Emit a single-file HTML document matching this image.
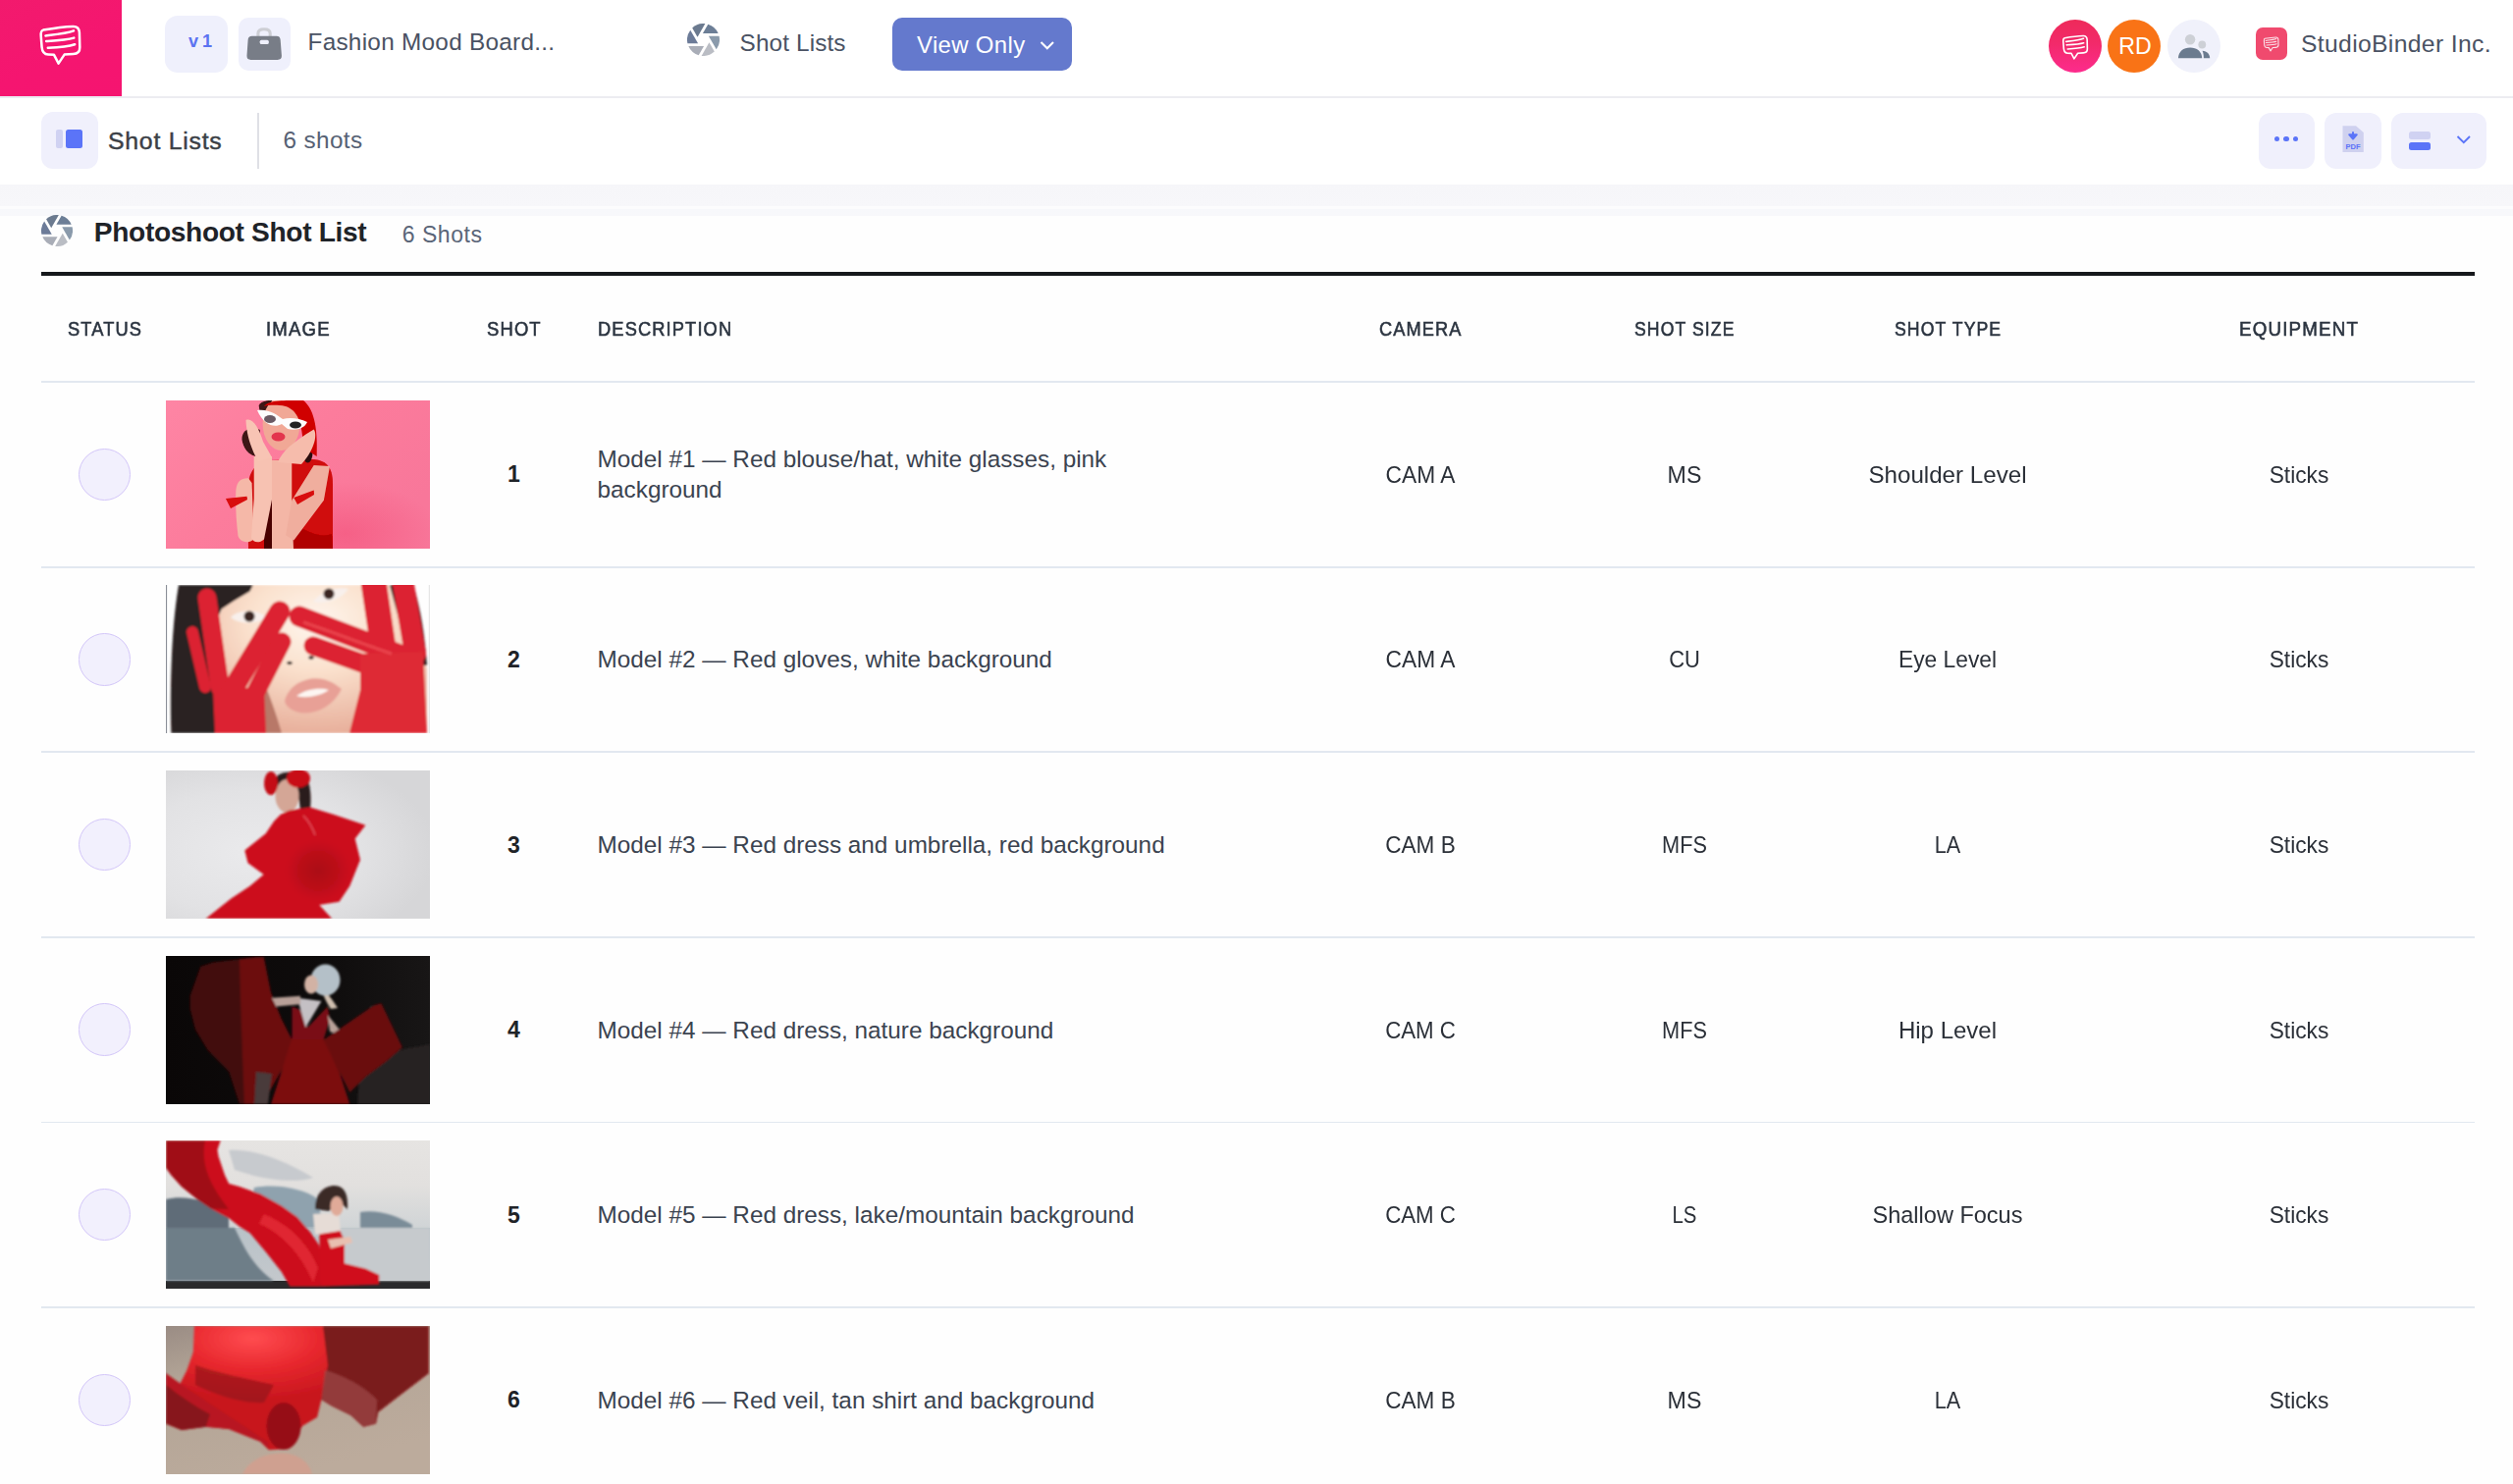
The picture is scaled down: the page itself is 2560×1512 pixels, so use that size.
<!DOCTYPE html>
<html><head><meta charset="utf-8"><title>Shot List</title>
<style>
html,body{margin:0;padding:0;}
body{width:2560px;height:1512px;overflow:hidden;position:relative;background:#fefefe;font-family:"Liberation Sans", sans-serif;}
.abs{position:absolute;}
.t{position:absolute;white-space:nowrap;}
</style></head><body>
<div class="abs" style="left:0;top:0;width:2560px;height:98px;background:#fff"></div>
<div class="abs" style="left:0;top:98px;width:2560px;height:2px;background:#ececf1"></div>
<div class="abs" style="left:0;top:0;width:124px;height:98px;background:linear-gradient(160deg,#f21a6d 0%,#f51570 60%,#f51470 100%)"></div>
<svg class="abs" style="left:0;top:0" width="124" height="98" viewBox="0 0 124 98"><path d="M44,30.6 C55,28.6 67,27.1 74.5,26.9 C78.8,26.8 80.6,28.8 80.9,33 L81.3,48.2 C81.4,52.8 79.4,54.7 74.6,55 L65.6,55.6 L59.6,64.6 L55,55.8 L49,55.6 C44.6,55.4 43,52.6 42.6,48.2 L41.7,36.2 C41.5,32.6 42.2,31 44,30.6 Z" fill="none" stroke="#fff" stroke-width="2.5" stroke-linejoin="round"/><path d="M46.4,36.4 C56,35.3 68,34.2 75,31.4" fill="none" stroke="#fff" stroke-width="2.5" stroke-linecap="round"/><path d="M47.2,42 C57,41.4 68,40.8 75.3,38.6" fill="none" stroke="#fff" stroke-width="2.5" stroke-linecap="round"/><path d="M48.8,48.8 C58,48.3 68,47.8 76.2,45.2" fill="none" stroke="#fff" stroke-width="2.5" stroke-linecap="round"/></svg>
<div class="abs" style="left:168px;top:16px;width:64px;height:58px;border-radius:13px;background:#eff0fc"></div>
<div class="t" style="left:192.00px;top:33.08px;font-size:18.1px;line-height:18.1px;color:#5b73f1;font-weight:700;letter-spacing:-0.5px;">v 1</div>
<div class="abs" style="left:243px;top:18px;width:53px;height:54px;border-radius:10px;background:#eff0fc"></div>
<svg class="abs" style="left:243px;top:18px" width="53" height="54" viewBox="243 18 53 54"><path d="M262.9,37 L262.9,34.2 C262.9,31.2 265,29.8 269,29.8 C273,29.8 275.2,31.2 275.2,34.2 L275.2,37" fill="none" stroke="#cdced4" stroke-width="3.1"/><path d="M256.6,36.8 L281.6,36.8 C284.4,36.8 285.6,38.3 285.7,41 L286.9,56.5 C287.1,59.4 285.7,60.9 282.8,60.9 L255.6,60.9 C252.7,60.9 251.3,59.4 251.5,56.5 L252.6,41 C252.8,38.3 253.9,36.8 256.6,36.8 Z" fill="#787d87"/><rect x="264.7" y="40.7" width="9.1" height="4.4" rx="1.6" fill="#eff0fc"/></svg>
<div class="t" style="left:313.50px;top:31.43px;font-size:24.3px;line-height:24.3px;color:#4a5263;font-weight:400;letter-spacing:0.29px;">Fashion Mood Board...</div>
<svg class="abs" style="left:700.4px;top:24px" width="33" height="33" viewBox="0 0 32 32"><path fill="#6c7e96" d="M15.45,9.65L30.69,9.65A16 16 0 0 0 20.63,0.68Z"/><path fill="#8a9aab" d="M21.23,12.35L28.84,25.54A16 16 0 0 0 31.58,12.35Z"/><path fill="#babdc4" d="M21.77,18.70L14.16,31.89A16 16 0 0 0 26.95,27.67Z"/><path fill="#a9adb7" d="M16.55,22.35L1.31,22.35A16 16 0 0 0 11.37,31.32Z"/><path fill="#6c7b98" d="M10.77,19.65L3.16,6.46A16 16 0 0 0 0.42,19.65Z"/><path fill="#6b7a8f" d="M10.23,13.30L17.84,0.11A16 16 0 0 0 5.05,4.33Z"/></svg>
<div class="t" style="left:753.60px;top:32.03px;font-size:24.3px;line-height:24.3px;color:#4a5263;font-weight:400;letter-spacing:0.133px;">Shot Lists</div>
<div class="abs" style="left:909px;top:18px;width:183px;height:54px;border-radius:10px;background:#6479cd"></div>
<div class="t" style="left:934.00px;top:34.07px;font-size:23.9px;line-height:23.9px;color:#ffffff;font-weight:400;letter-spacing:0.375px;">View Only</div>
<svg class="abs" style="left:1056px;top:38px" width="22" height="16" viewBox="0 0 22 16"><path d="M4.5,5 L10.8,11.2 L17,5" fill="none" stroke="#fff" stroke-width="2.1"/></svg>
<div class="abs" style="left:2086.5px;top:19.5px;width:54px;height:54px;border-radius:50%;background:linear-gradient(180deg,#ee2a5a 0%,#f22a6a 45%,#fd2b8d 100%)"></div>
<svg class="abs" style="left:2086.5px;top:19.5px" width="54" height="54" viewBox="0 0 54 54"><g transform="translate(14.7,16.4) scale(0.62) translate(-41.5,-26.8)"><path d="M44,30.6 C55,28.6 67,27.1 74.5,26.9 C78.8,26.8 80.6,28.8 80.9,33 L81.3,48.2 C81.4,52.8 79.4,54.7 74.6,55 L65.6,55.6 L59.6,64.6 L55,55.8 L49,55.6 C44.6,55.4 43,52.6 42.6,48.2 L41.7,36.2 C41.5,32.6 42.2,31 44,30.6 Z" fill="none" stroke="#fff" stroke-width="2.6" stroke-linejoin="round"/><path d="M46.4,36.4 C56,35.3 68,34.2 75,31.4" fill="none" stroke="#fff" stroke-width="2.6" stroke-linecap="round"/><path d="M47.2,42 C57,41.4 68,40.8 75.3,38.6" fill="none" stroke="#fff" stroke-width="2.6" stroke-linecap="round"/><path d="M48.8,48.8 C58,48.3 68,47.8 76.2,45.2" fill="none" stroke="#fff" stroke-width="2.6" stroke-linecap="round"/></g></svg>
<div class="abs" style="left:2147.2px;top:19.5px;width:54px;height:54px;border-radius:50%;background:#f97316"></div>
<div class="t" style="left:2144.90px;top:35.56px;width:60px;text-align:center;font-size:23.2px;line-height:23.2px;color:#ffffff;font-weight:400;letter-spacing:0px;">RD</div>
<div class="abs" style="left:2208.1px;top:19.5px;width:54px;height:54px;border-radius:50%;background:#f0f1fb"></div>
<svg class="abs" style="left:2208.1px;top:19.5px" width="54" height="54" viewBox="2208.1 19.5 54 54"><circle cx="2231.2" cy="39.7" r="5.2" fill="#cdd0d6"/><circle cx="2243.4" cy="45" r="3.9" fill="#cdd0d6"/><path d="M2219.1,58.8 C2219.1,52 2224.5,48 2231.2,48 C2237.9,48 2243.3,52 2243.3,58.8 Z" fill="#6b7b8f"/><path d="M2243.6,51.2 C2248.5,51.6 2251.3,54.6 2251.3,58.8 L2245,58.8 C2245,55.5 2244.6,53 2243.6,51.2 Z" fill="#6b7b8f"/></svg>
<div class="abs" style="left:2298px;top:28.4px;width:32.2px;height:32.4px;border-radius:7px;background:#f04a6e"></div>
<svg class="abs" style="left:2298px;top:28.4px" width="32.2" height="32.4" viewBox="0 0 32.2 32.4"><g transform="translate(8.3,9.9) scale(0.37) translate(-41.5,-26.8)"><path d="M44,30.6 C55,28.6 67,27.1 74.5,26.9 C78.8,26.8 80.6,28.8 80.9,33 L81.3,48.2 C81.4,52.8 79.4,54.7 74.6,55 L65.6,55.6 L59.6,64.6 L55,55.8 L49,55.6 C44.6,55.4 43,52.6 42.6,48.2 L41.7,36.2 C41.5,32.6 42.2,31 44,30.6 Z" fill="none" stroke="#fbe3ea" stroke-width="3" stroke-linejoin="round"/><path d="M46.4,36.4 C56,35.3 68,34.2 75,31.4" fill="none" stroke="#fbe3ea" stroke-width="3" stroke-linecap="round"/><path d="M47.2,42 C57,41.4 68,40.8 75.3,38.6" fill="none" stroke="#fbe3ea" stroke-width="3" stroke-linecap="round"/><path d="M48.8,48.8 C58,48.3 68,47.8 76.2,45.2" fill="none" stroke="#fbe3ea" stroke-width="3" stroke-linecap="round"/></g></svg>
<div class="t" style="left:2344.00px;top:33.19px;font-size:24.7px;line-height:24.7px;color:#4a5263;font-weight:400;letter-spacing:0.344px;">StudioBinder Inc.</div>
<div class="abs" style="left:0;top:100px;width:2560px;height:88px;background:#fff"></div>
<div class="abs" style="left:42.2px;top:114.3px;width:57.6px;height:57.7px;border-radius:12px;background:#f0f0fc"></div>
<div class="abs" style="left:57.2px;top:131.9px;width:6.9px;height:19.2px;border-radius:2px;background:#d0d2f2"></div>
<div class="abs" style="left:66.8px;top:131.9px;width:17.4px;height:19.2px;border-radius:2.5px;background:#5b74f8"></div>
<div class="t" style="left:110.00px;top:131.61px;font-size:24.8px;line-height:24.8px;color:#3b3f46;font-weight:400;letter-spacing:0.756px;-webkit-text-stroke:0.45px #3b3f46">Shot Lists</div>
<div class="abs" style="left:262.3px;top:114.6px;width:1.6px;height:57px;background:#dfe0e6"></div>
<div class="t" style="left:288.40px;top:131.43px;font-size:24.3px;line-height:24.3px;color:#566174;font-weight:400;letter-spacing:0.4px;">6 shots</div>
<div class="abs" style="left:2300.6px;top:114.7px;width:57.3px;height:57px;border-radius:12px;background:#f0f0fc"></div>
<div class="abs" style="left:2317.00px;top:138.90px;width:5.4px;height:5.4px;border-radius:50%;background:#5b74f8"></div>
<div class="abs" style="left:2326.40px;top:138.90px;width:5.4px;height:5.4px;border-radius:50%;background:#5b74f8"></div>
<div class="abs" style="left:2335.80px;top:138.90px;width:5.4px;height:5.4px;border-radius:50%;background:#5b74f8"></div>
<div class="abs" style="left:2368.4px;top:114.7px;width:57.6px;height:57px;border-radius:12px;background:#f0f0fc"></div>
<svg class="abs" style="left:2386px;top:127.8px" width="22" height="27.2" viewBox="0 0 22 27.2"><path d="M0.5,0.3 L14,0.3 L21.8,7 L21.8,27 L0.5,27 Z" fill="#cfd1ef"/><path d="M11,6.2 L11,10.5 M7.2,9.2 L11,13.5 L14.8,9.2 Z" stroke="#5b74f8" stroke-width="2" fill="#5b74f8" stroke-linejoin="round"/><text x="11" y="24" text-anchor="middle" font-family="Liberation Sans" font-weight="700" font-size="7.6" fill="#5b74f8">PDF</text></svg>
<div class="abs" style="left:2436.3px;top:114.7px;width:96.7px;height:57px;border-radius:12px;background:#f0f0fc"></div>
<div class="abs" style="left:2454px;top:133.8px;width:21.8px;height:8px;border-radius:2.5px;background:#d0d2f2"></div>
<div class="abs" style="left:2454px;top:144.5px;width:21.8px;height:8.2px;border-radius:2.5px;background:#5b74f8"></div>
<svg class="abs" style="left:2500px;top:134px" width="20" height="16" viewBox="0 0 20 16"><path d="M3.5,5 L9.8,11.2 L16,5" fill="none" stroke="#5b74f8" stroke-width="1.9"/></svg>
<div class="abs" style="left:0;top:188px;width:2560px;height:36px;background:linear-gradient(180deg,#f6f6f9 0px,#f7f7fa 22px,#fcfcfd 22px,#fcfcfd 25px,#f7f8fb 25px,#f8f8fb 32px,#fefefe 32px)"></div>
<svg class="abs" style="left:42.1px;top:219px" width="32" height="32" viewBox="0 0 32 32"><path fill="#6c7e96" d="M15.45,9.65L30.69,9.65A16 16 0 0 0 20.63,0.68Z"/><path fill="#8a9aab" d="M21.23,12.35L28.84,25.54A16 16 0 0 0 31.58,12.35Z"/><path fill="#babdc4" d="M21.77,18.70L14.16,31.89A16 16 0 0 0 26.95,27.67Z"/><path fill="#a9adb7" d="M16.55,22.35L1.31,22.35A16 16 0 0 0 11.37,31.32Z"/><path fill="#6c7b98" d="M10.77,19.65L3.16,6.46A16 16 0 0 0 0.42,19.65Z"/><path fill="#6b7a8f" d="M10.23,13.30L17.84,0.11A16 16 0 0 0 5.05,4.33Z"/></svg>
<div class="t" style="left:95.80px;top:222.81px;font-size:28.1px;line-height:28.1px;color:#1f2328;font-weight:700;letter-spacing:-0.321px;">Photoshoot Shot List</div>
<div class="t" style="left:409.80px;top:227.53px;font-size:23.0px;line-height:23.0px;color:#5a6578;font-weight:400;letter-spacing:0.517px;">6 Shots</div>
<div class="abs" style="left:42px;top:277px;width:2479px;height:3.5px;background:#16181c"></div>
<div class="t" style="left:69.20px;top:325.31px;font-size:20.9px;line-height:20.9px;color:#2b3440;font-weight:400;letter-spacing:1.3px;-webkit-text-stroke:0.6px #2b3440;transform:scaleX(0.8741);transform-origin:0 0;">STATUS</div>
<div class="t" style="left:271.30px;top:325.31px;font-size:20.9px;line-height:20.9px;color:#2b3440;font-weight:400;letter-spacing:1.3px;-webkit-text-stroke:0.6px #2b3440;transform:scaleX(0.8915);transform-origin:0 0;">IMAGE</div>
<div class="t" style="left:496.10px;top:325.31px;font-size:20.9px;line-height:20.9px;color:#2b3440;font-weight:400;letter-spacing:1.3px;-webkit-text-stroke:0.6px #2b3440;transform:scaleX(0.882);transform-origin:0 0;">SHOT</div>
<div class="t" style="left:609.30px;top:325.31px;font-size:20.9px;line-height:20.9px;color:#2b3440;font-weight:400;letter-spacing:1.3px;-webkit-text-stroke:0.6px #2b3440;transform:scaleX(0.8739);transform-origin:0 0;">DESCRIPTION</div>
<div class="t" style="left:1404.90px;top:325.31px;font-size:20.9px;line-height:20.9px;color:#2b3440;font-weight:400;letter-spacing:1.3px;-webkit-text-stroke:0.6px #2b3440;transform:scaleX(0.8708);transform-origin:0 0;">CAMERA</div>
<div class="t" style="left:1664.50px;top:325.31px;font-size:20.9px;line-height:20.9px;color:#2b3440;font-weight:400;letter-spacing:1.3px;-webkit-text-stroke:0.6px #2b3440;transform:scaleX(0.8433);transform-origin:0 0;">SHOT SIZE</div>
<div class="t" style="left:1929.80px;top:325.31px;font-size:20.9px;line-height:20.9px;color:#2b3440;font-weight:400;letter-spacing:1.3px;-webkit-text-stroke:0.6px #2b3440;transform:scaleX(0.8445);transform-origin:0 0;">SHOT TYPE</div>
<div class="t" style="left:2281.30px;top:325.31px;font-size:20.9px;line-height:20.9px;color:#2b3440;font-weight:400;letter-spacing:1.3px;-webkit-text-stroke:0.6px #2b3440;transform:scaleX(0.8992);transform-origin:0 0;">EQUIPMENT</div>
<div class="abs" style="left:42px;top:388.20px;width:2479px;height:1.9px;background:#e2e8f0"></div>
<div class="abs" style="left:42px;top:576.80px;width:2479px;height:1.9px;background:#e2e8f0"></div>
<div class="abs" style="left:79.65px;top:456.55px;width:53.5px;height:53.5px;box-sizing:border-box;border-radius:50%;background:#f2f0fd;border:1.9px solid #d3c6f9"></div>
<svg class="abs" style="left:169px;top:407.80px" width="269" height="151" viewBox="0 0 269 151"><defs><linearGradient id="g1" x1="0" y1="0" x2="1" y2="0.6"><stop offset="0" stop-color="#fe85a4"/><stop offset="0.5" stop-color="#fc7c9c"/><stop offset="1" stop-color="#f8779a"/></linearGradient><radialGradient id="r1" cx="0.68" cy="0.9" r="0.35"><stop offset="0" stop-color="#f4567e" stop-opacity="0.7"/><stop offset="1" stop-color="#f4567e" stop-opacity="0"/></radialGradient><filter id="f1"><feGaussianBlur stdDeviation="0.6"/></filter></defs>
<rect width="269" height="151" fill="url(#g1)"/><rect width="269" height="151" fill="url(#r1)"/>
<g filter="url(#f1)">
<path d="M84,151 L83.5,90 C84,72 92,63 104,61 L150,60 C162,61 170,66 170,85 L170,151 Z" fill="#d00808"/>
<path d="M128,151 L130,125 C145,135 158,140 169,136 L170,151 Z" fill="#b00004"/>
<rect x="100" y="86" width="8" height="65" fill="#4a0000"/>
<path d="M71.3,92 C72,82 77,79 84,79.3 L87.6,84 L89.7,141.4 C84,146 76,145 73.5,138 C71.5,122 70.8,106 71.3,92 Z" fill="#f5b8a8"/>
<path d="M89.7,57 L108,57 L108,101 L100,141.4 C95,146 89,145 87,140 L89.7,100 Z" fill="#f7c2b2"/>
<path d="M61,100 L82.5,97.7 L83,101 L66,110 Z" fill="#d80808"/>
<path d="M108,61 L128.3,61 L128.3,110 L130,151 L108,151 Z" fill="#f4b6a6"/>
<path d="M122.2,137.3 L128.3,101.7 L150.7,66.1 L167,67.1 L160.9,101.7 L130.3,142.4 Z" fill="#f0ae9e"/>
<path d="M130.3,99 L150.7,91.6 L151,96 L134,106 Z" fill="#d80808"/>
<path d="M77.5,40 C77,30 86,26 95.8,30 L95.8,57 C86,58 79,50 77.5,40 Z" fill="#3c1212"/>
<path d="M94.7,5 C98,0 104,0 108,0 L108,12 L96,14 Z" fill="#3c1212"/>
<ellipse cx="144.5" cy="53" rx="5" ry="10.5" fill="#2a0a0a"/>
<ellipse cx="117.6" cy="24" rx="19" ry="27" fill="#f1a896"/>
<path d="M100,6 C104,0 118,0 135,0 L140,0 C150,8 155,25 153.7,57 L140,48 C139,22 134,10 122,6 C112,4 104,5 100,6 Z" fill="#d00000"/>
<path d="M81.5,20 C88,17 95,28 99,42 L108,58 L94,62 C88,52 82,36 81.5,20 Z" fill="#f8c4b4"/>
<path d="M150.7,29.5 C155,36 150,52 138,65 L114,63 C118,52 130,42 150.7,29.5 Z" fill="#f6bcac"/>
<path d="M93,10 C104,8 114,15 119,19 C126,17 136,18 144,22 C141,29 132,31 124,29 L118,24 C111,28 100,26 93,10 Z" fill="#fdfdfd"/>
<ellipse cx="106" cy="19" rx="6" ry="4" fill="#6a5a64"/><ellipse cx="132" cy="25" rx="6" ry="3.5" fill="#222024"/>
<ellipse cx="114.5" cy="37" rx="7" ry="4.5" fill="#e3354e"/>
</g></svg>
<div class="t" style="left:493.30px;top:472.43px;width:60px;text-align:center;font-size:23.0px;line-height:23.0px;color:#1f2328;font-weight:700;letter-spacing:0px;">1</div>
<div class="t" style="left:608.60px;top:455.73px;font-size:24.3px;line-height:24.3px;color:#3b4350;font-weight:400;letter-spacing:0px;white-space:nowrap">Model #1 — Red blouse/hat, white glasses, pink</div>
<div class="t" style="left:608.60px;top:487.43px;font-size:24.3px;line-height:24.3px;color:#3b4350;font-weight:400;letter-spacing:0px;">background</div>
<div class="t" style="left:1297.20px;top:471.83px;width:300px;text-align:center;font-size:24.3px;line-height:24.3px;color:#2b3038;font-weight:400;letter-spacing:0px;;transform:scaleX(0.936);transform-origin:50% 0;">CAM A</div>
<div class="t" style="left:1565.50px;top:471.83px;width:300px;text-align:center;font-size:24.3px;line-height:24.3px;color:#2b3038;font-weight:400;letter-spacing:0px;;transform:scaleX(0.953);transform-origin:50% 0;">MS</div>
<div class="t" style="left:1833.90px;top:471.83px;width:300px;text-align:center;font-size:24.3px;line-height:24.3px;color:#2b3038;font-weight:400;letter-spacing:0px;;transform:scaleX(0.994);transform-origin:50% 0;">Shoulder Level</div>
<div class="t" style="left:2191.70px;top:471.83px;width:300px;text-align:center;font-size:24.3px;line-height:24.3px;color:#2b3038;font-weight:400;letter-spacing:0px;;transform:scaleX(0.936);transform-origin:50% 0;">Sticks</div>
<div class="abs" style="left:42px;top:765.40px;width:2479px;height:1.9px;background:#e2e8f0"></div>
<div class="abs" style="left:79.65px;top:645.15px;width:53.5px;height:53.5px;box-sizing:border-box;border-radius:50%;background:#f2f0fd;border:1.9px solid #d3c6f9"></div>
<svg class="abs" style="left:169px;top:596.40px" width="269" height="151" viewBox="0 0 269 151"><defs><filter id="f2"><feGaussianBlur stdDeviation="0.9"/></filter><radialGradient id="g2" cx="0.47" cy="0.25" r="0.75"><stop offset="0" stop-color="#fff6ee"/><stop offset="0.45" stop-color="#fae0cc"/><stop offset="1" stop-color="#e8b09c"/></radialGradient></defs>
<rect width="269" height="151" fill="#fefefe"/>
<rect x="0" y="0" width="1.1" height="151" fill="#8a8f98"/><rect x="267.8" y="0" width="1" height="151" fill="#e0e0e0"/>
<g filter="url(#f2)">
<path d="M53.5,0 L235,0 L266,85 L266,151 L53.5,151 Z" fill="url(#g2)"/>
<path d="M13,0 L88.8,0 L85.6,6.4 L69.6,16 L56.7,24.6 L53.5,32 L53.5,151 L5.4,151 C4,100 6,40 13,0 Z" fill="#2a2020"/>
<path d="M228,0 L252,0 C260,25 264,55 266,82 L250,82 Z" fill="#2a1e1e"/>
<path d="M95,88 C105,110 112,130 118,151 L88,151 C88,125 90,105 95,88 Z" fill="#b87868"/>
<path d="M66,33 C74,25 92,24 103,33 C92,40 76,41 66,33 Z" fill="#f8f0ec"/><ellipse cx="85" cy="32" rx="5.5" ry="5.5" fill="#3a2622"/>
<path d="M150,17 C158,6 176,1 186,4 C178,16 160,20 150,17 Z" fill="#f8f0ec"/><ellipse cx="166" cy="9" rx="5.5" ry="5.5" fill="#3a2622"/>
<ellipse cx="126" cy="79.5" rx="2.8" ry="1.8" fill="#2a1a18"/><ellipse cx="148" cy="74" rx="2.8" ry="1.8" fill="#2a1a18"/>
<path d="M121,118 C126,100 145,93 160,96 C170,98 176,104 179,106 C170,125 150,133 136,130 C128,128 122,124 121,118 Z" fill="#e8a096"/>
<path d="M133,113 C142,106 158,104 166,107 C158,113 142,116 133,113 Z" fill="#fdf6f2"/>
<g stroke="#dc2430" stroke-linecap="round" fill="none">
<path d="M27,48 L40,104" stroke-width="12"/>
<path d="M42,13 L55,104" stroke-width="19"/>
<path d="M116,27 L67,108" stroke-width="21"/>
<path d="M118,58 L82,128" stroke-width="19"/>
<path d="M136,32 L241,72" stroke-width="21"/>
<path d="M150,62 L234,92" stroke-width="19"/>
<path d="M212,0 L222,68" stroke-width="26"/>
<path d="M242,0 L254,70" stroke-width="22"/>
</g>
<path d="M48,107 L100,104 L102,151 L50,151 Z" fill="#dc2430"/>
<path d="M198,70 L262,68 L266,151 L187,151 L198,107 Z" fill="#de2a34"/>
<path d="M140,38 C170,48 200,60 230,70" stroke="#ee5058" stroke-width="3" fill="none" opacity="0.7"/>
</g></svg>
<div class="t" style="left:493.30px;top:661.03px;width:60px;text-align:center;font-size:23.0px;line-height:23.0px;color:#1f2328;font-weight:700;letter-spacing:0px;">2</div>
<div class="t" style="left:608.60px;top:660.43px;font-size:24.3px;line-height:24.3px;color:#3b4350;font-weight:400;letter-spacing:0px;white-space:nowrap">Model #2 — Red gloves, white background</div>
<div class="t" style="left:1297.20px;top:660.43px;width:300px;text-align:center;font-size:24.3px;line-height:24.3px;color:#2b3038;font-weight:400;letter-spacing:0px;;transform:scaleX(0.936);transform-origin:50% 0;">CAM A</div>
<div class="t" style="left:1565.50px;top:660.43px;width:300px;text-align:center;font-size:24.3px;line-height:24.3px;color:#2b3038;font-weight:400;letter-spacing:0px;;transform:scaleX(0.903);transform-origin:50% 0;">CU</div>
<div class="t" style="left:1833.90px;top:660.43px;width:300px;text-align:center;font-size:24.3px;line-height:24.3px;color:#2b3038;font-weight:400;letter-spacing:0px;;transform:scaleX(0.937);transform-origin:50% 0;">Eye Level</div>
<div class="t" style="left:2191.70px;top:660.43px;width:300px;text-align:center;font-size:24.3px;line-height:24.3px;color:#2b3038;font-weight:400;letter-spacing:0px;;transform:scaleX(0.936);transform-origin:50% 0;">Sticks</div>
<div class="abs" style="left:42px;top:954.00px;width:2479px;height:1.9px;background:#e2e8f0"></div>
<div class="abs" style="left:79.65px;top:833.75px;width:53.5px;height:53.5px;box-sizing:border-box;border-radius:50%;background:#f2f0fd;border:1.9px solid #d3c6f9"></div>
<svg class="abs" style="left:169px;top:785.00px" width="269" height="151" viewBox="0 0 269 151"><defs><filter id="f3"><feGaussianBlur stdDeviation="1"/></filter><radialGradient id="g3" cx="0.32" cy="0.55" r="0.7"><stop offset="0" stop-color="#eaeaec"/><stop offset="0.6" stop-color="#e2e2e4"/><stop offset="1" stop-color="#d6d6d8"/></radialGradient><radialGradient id="d3" cx="0.5" cy="0.5" r="0.5"><stop offset="0" stop-color="#a00812" stop-opacity="0.75"/><stop offset="0.6" stop-color="#a80a16" stop-opacity="0.45"/><stop offset="1" stop-color="#b80c18" stop-opacity="0"/></radialGradient></defs>
<rect width="269" height="151" fill="url(#g3)"/>
<g filter="url(#f3)">
<path d="M113,6 C118,0 138,0 144,8 C148,18 148,30 147,40 L137,40 C136,25 130,12 120,10 L112,20 Z" fill="#2a1a1a"/>
<ellipse cx="123.5" cy="26" rx="12" ry="17" fill="#d4a696"/>
<ellipse cx="107" cy="13" rx="7" ry="12" fill="#c40814"/><ellipse cx="135" cy="8" rx="12" ry="9.5" fill="#c80a16"/>
<path d="M116.7,45 L125.2,40.7 L146.7,37.5 L171.3,45 L203.4,55.7 L192.7,69.6 L198,91 L191.6,107 L187.3,117.8 L176.6,133.8 L156.3,137 L169.1,151 L40.7,151 L66.4,130.6 L85.6,117.8 L99.6,106 L83.5,94.2 L80.3,81.4 L101.7,64.2 L110.3,51.4 Z" fill="#cc101c"/>
<ellipse cx="155" cy="102" rx="34" ry="32" fill="url(#d3)"/>
<path d="M140,46 C146,52 150,60 152,66" stroke="#e86070" stroke-width="2" fill="none" opacity="0.6"/>
</g></svg>
<div class="t" style="left:493.30px;top:849.63px;width:60px;text-align:center;font-size:23.0px;line-height:23.0px;color:#1f2328;font-weight:700;letter-spacing:0px;">3</div>
<div class="t" style="left:608.60px;top:849.03px;font-size:24.3px;line-height:24.3px;color:#3b4350;font-weight:400;letter-spacing:0px;white-space:nowrap">Model #3 — Red dress and umbrella, red background</div>
<div class="t" style="left:1297.20px;top:849.03px;width:300px;text-align:center;font-size:24.3px;line-height:24.3px;color:#2b3038;font-weight:400;letter-spacing:0px;;transform:scaleX(0.928);transform-origin:50% 0;">CAM B</div>
<div class="t" style="left:1565.50px;top:849.03px;width:300px;text-align:center;font-size:24.3px;line-height:24.3px;color:#2b3038;font-weight:400;letter-spacing:0px;;transform:scaleX(0.894);transform-origin:50% 0;">MFS</div>
<div class="t" style="left:1833.90px;top:849.03px;width:300px;text-align:center;font-size:24.3px;line-height:24.3px;color:#2b3038;font-weight:400;letter-spacing:0px;;transform:scaleX(0.889);transform-origin:50% 0;">LA</div>
<div class="t" style="left:2191.70px;top:849.03px;width:300px;text-align:center;font-size:24.3px;line-height:24.3px;color:#2b3038;font-weight:400;letter-spacing:0px;;transform:scaleX(0.936);transform-origin:50% 0;">Sticks</div>
<div class="abs" style="left:42px;top:1142.60px;width:2479px;height:1.9px;background:#e2e8f0"></div>
<div class="abs" style="left:79.65px;top:1022.35px;width:53.5px;height:53.5px;box-sizing:border-box;border-radius:50%;background:#f2f0fd;border:1.9px solid #d3c6f9"></div>
<svg class="abs" style="left:169px;top:973.60px" width="269" height="151" viewBox="0 0 269 151"><defs><filter id="f4"><feGaussianBlur stdDeviation="1.1"/></filter><linearGradient id="bg4" x1="0" y1="0" x2="1" y2="0"><stop offset="0" stop-color="#0a0707"/><stop offset="0.6" stop-color="#0e0c0c"/><stop offset="1" stop-color="#181616"/></linearGradient></defs>
<rect width="269" height="151" fill="url(#bg4)"/>
<g filter="url(#f4)">
<path d="M198,112 C215,100 240,95 269,90 L269,151 L195,151 Z" fill="#262222"/>
<path d="M24.6,40.7 L35.3,10.7 L48.2,6.4 L75,3.2 L91,1.1 L99.6,1.1 L101.7,10.7 L107,37.5 L117.7,64.2 L128.5,85.6 L123,107 L105,139 L98.5,151 L75,151 L64.2,117.8 L42.8,96.3 L30,75 L24.6,53.5 Z" fill="#420808"/>
<path d="M75,3.2 L99.6,1.1 L107,37.5 L117.7,64.2 L128.5,85.6 L123,107 L105,139 L98.5,151 L80,151 C78,100 76,50 75,3.2 Z" fill="#6c0a0e"/>
<path d="M92,118 L108,120 L104,151 L90,151 Z" fill="#4a3a3a"/>
<path d="M128.5,83.5 L160.6,83.5 L176.6,117.8 L187.3,151 L107,151 L117.7,117.8 Z" fill="#7c0810"/>
<path d="M128.5,51.4 L139,55.7 L144.5,72.8 L164.8,51.4 L167,64.2 L160.6,85.6 L128.5,85.6 Z" fill="#7a0a12"/>
<path d="M133.8,42.8 L158.4,46 L142.4,72.8 Z" fill="#c4c0c4"/>
<path d="M108,42.8 L137,40.7 L137,49.2 L112.4,51.4 Z" fill="#b8a098"/>
<path d="M164.8,60 L182,81.4 L209.8,51.4 L214,53.5 L188.4,85.6 L167,77.1 Z" fill="#b8a098"/>
<path d="M160.6,85.6 L212,50.3 L219.4,48.2 L240.8,93.1 L224.8,107 L203.4,123 L187.3,139 L176.6,117.8 Z" fill="#6a0a0e"/>
<path d="M158,27 C162,35 172,48 175,53 L168,54 C162,45 158,36 158,27 Z" fill="#d0c0b0"/>
<ellipse cx="162.5" cy="24.5" rx="15" ry="16" fill="#b4c0c8"/>
<ellipse cx="148" cy="29" rx="7" ry="9.5" fill="#d2b2a4"/>
</g></svg>
<div class="t" style="left:493.30px;top:1038.23px;width:60px;text-align:center;font-size:23.0px;line-height:23.0px;color:#1f2328;font-weight:700;letter-spacing:0px;">4</div>
<div class="t" style="left:608.60px;top:1037.63px;font-size:24.3px;line-height:24.3px;color:#3b4350;font-weight:400;letter-spacing:0px;white-space:nowrap">Model #4 — Red dress, nature background</div>
<div class="t" style="left:1297.20px;top:1037.63px;width:300px;text-align:center;font-size:24.3px;line-height:24.3px;color:#2b3038;font-weight:400;letter-spacing:0px;;transform:scaleX(0.916);transform-origin:50% 0;">CAM C</div>
<div class="t" style="left:1565.50px;top:1037.63px;width:300px;text-align:center;font-size:24.3px;line-height:24.3px;color:#2b3038;font-weight:400;letter-spacing:0px;;transform:scaleX(0.894);transform-origin:50% 0;">MFS</div>
<div class="t" style="left:1833.90px;top:1037.63px;width:300px;text-align:center;font-size:24.3px;line-height:24.3px;color:#2b3038;font-weight:400;letter-spacing:0px;;transform:scaleX(0.988);transform-origin:50% 0;">Hip Level</div>
<div class="t" style="left:2191.70px;top:1037.63px;width:300px;text-align:center;font-size:24.3px;line-height:24.3px;color:#2b3038;font-weight:400;letter-spacing:0px;;transform:scaleX(0.936);transform-origin:50% 0;">Sticks</div>
<div class="abs" style="left:42px;top:1331.20px;width:2479px;height:1.9px;background:#e2e8f0"></div>
<div class="abs" style="left:79.65px;top:1210.95px;width:53.5px;height:53.5px;box-sizing:border-box;border-radius:50%;background:#f2f0fd;border:1.9px solid #d3c6f9"></div>
<svg class="abs" style="left:169px;top:1162.20px" width="269" height="151" viewBox="0 0 269 151"><defs><filter id="f5"><feGaussianBlur stdDeviation="1.1"/></filter><linearGradient id="g5" x1="0" y1="0" x2="0" y2="1"><stop offset="0" stop-color="#e6e4e2"/><stop offset="0.3" stop-color="#e2e0de"/><stop offset="0.59" stop-color="#d0d4d6"/><stop offset="0.59" stop-color="#b8c2c8"/><stop offset="0.95" stop-color="#c4c8cc"/><stop offset="0.95" stop-color="#2a2a2c"/><stop offset="1" stop-color="#2a2a2c"/></linearGradient></defs>
<rect width="269" height="151" fill="url(#g5)"/>
<g filter="url(#f5)">
<path d="M64,10 C90,8 120,20 150,38 C130,44 100,40 70,30 Z" fill="#c4c8cc" opacity="0.9"/>
<path d="M0,60 C20,55 40,62 64,70 L64,89 L0,89 Z" fill="#5e6c78"/>
<path d="M90,48 C110,44 140,48 155,60 L160,89 L80,89 Z" fill="#8fa2ae"/>
<path d="M198,73 C215,70 235,76 251,86 L251,89 L198,89 Z" fill="#7a8c98"/>
<path d="M0,89 L70,89 C80,110 90,130 110,143 L0,143 Z" fill="#6e7e88"/>
<path d="M160,89 L269,89 L269,143 L160,143 Z" fill="#c6cacd"/>
<path d="M0,0 L55.7,0 L52.5,9.6 L53.5,16 L60,35.3 L64.2,43.9 L75,47.1 L96.3,54.6 L117.7,66.4 L133.8,78.1 L147.7,94.2 L156.3,107 L159.5,123 L158.4,139 L157.4,148.8 L126.3,148.8 L117.7,133.8 L101.7,113.5 L85.6,94.2 L75,87.8 L64.2,79.2 L46,69.6 L32.1,60 L16,47.1 L5.4,35.3 L0,27.8 Z" fill="#cc0e1c"/>
<path d="M0,0 L40,0 C35,25 45,45 64,70 L46,69.6 L32.1,60 L16,47.1 L5.4,35.3 L0,27.8 Z" fill="#a00a14"/>
<path d="M100,75 C125,85 145,105 155,130 L150,145 C140,120 120,95 95,85 Z" fill="#e8303a" opacity="0.7"/>
<path d="M156.3,92 L175.5,87.8 L182,101.7 L182,125.2 L203.4,130.6 L217.3,137 L217.3,146.7 L157.4,148.8 Z" fill="#d0101a"/>
<path d="M150,75 L176,74 L178,92 L152,96 Z" fill="#e6dcd6"/>
<path d="M152,70 C152,55 160,46 172,46 C182,46 186,55 185,70 L176,62 L166,72 Z" fill="#3a2a28"/>
<ellipse cx="174" cy="67" rx="6.5" ry="10" fill="#e0aa98"/>
<path d="M165,101 L188,98 L190,104 L168,110 Z" fill="#e8c0b0"/>
</g></svg>
<div class="t" style="left:493.30px;top:1226.83px;width:60px;text-align:center;font-size:23.0px;line-height:23.0px;color:#1f2328;font-weight:700;letter-spacing:0px;">5</div>
<div class="t" style="left:608.60px;top:1226.23px;font-size:24.3px;line-height:24.3px;color:#3b4350;font-weight:400;letter-spacing:0px;white-space:nowrap">Model #5 — Red dress, lake/mountain background</div>
<div class="t" style="left:1297.20px;top:1226.23px;width:300px;text-align:center;font-size:24.3px;line-height:24.3px;color:#2b3038;font-weight:400;letter-spacing:0px;;transform:scaleX(0.916);transform-origin:50% 0;">CAM C</div>
<div class="t" style="left:1565.50px;top:1226.23px;width:300px;text-align:center;font-size:24.3px;line-height:24.3px;color:#2b3038;font-weight:400;letter-spacing:0px;;transform:scaleX(0.839);transform-origin:50% 0;">LS</div>
<div class="t" style="left:1833.90px;top:1226.23px;width:300px;text-align:center;font-size:24.3px;line-height:24.3px;color:#2b3038;font-weight:400;letter-spacing:0px;;transform:scaleX(0.968);transform-origin:50% 0;">Shallow Focus</div>
<div class="t" style="left:2191.70px;top:1226.23px;width:300px;text-align:center;font-size:24.3px;line-height:24.3px;color:#2b3038;font-weight:400;letter-spacing:0px;;transform:scaleX(0.936);transform-origin:50% 0;">Sticks</div>
<div class="abs" style="left:42px;top:1519.80px;width:2479px;height:1.9px;background:#e2e8f0"></div>
<div class="abs" style="left:79.65px;top:1399.55px;width:53.5px;height:53.5px;box-sizing:border-box;border-radius:50%;background:#f2f0fd;border:1.9px solid #d3c6f9"></div>
<svg class="abs" style="left:169px;top:1350.80px" width="269" height="151" viewBox="0 0 269 151"><defs><filter id="f6"><feGaussianBlur stdDeviation="1.1"/></filter><linearGradient id="bg6" x1="0" y1="0" x2="0.5" y2="1"><stop offset="0" stop-color="#9a8c84"/><stop offset="0.3" stop-color="#b2a496"/><stop offset="1" stop-color="#bcab9c"/></linearGradient><radialGradient id="hi6" cx="0.33" cy="0.1" r="0.5"><stop offset="0" stop-color="#ff4c50"/><stop offset="0.5" stop-color="#e8282e"/><stop offset="1" stop-color="#c8161e"/></radialGradient></defs>
<rect width="269" height="151" fill="url(#bg6)"/>
<g filter="url(#f6)">
<path d="M28.9,0 L267.6,0 L267.6,48.2 L235.5,72.8 L216.2,87.8 L214,99.6 L201.2,102.8 L188.4,91 L169.1,81.4 L158.4,75 L154.1,93.1 L139.2,101.7 L130.6,115.6 L125.2,125.2 L105,126.3 L96.3,117.8 L64.2,104.9 L40.7,102.8 L16,106 L0,99.6 L0,48.2 L13.9,60 L21.4,45 L27.8,26.8 Z" fill="url(#hi6)"/>
<path d="M160,0 L267.6,0 L267.6,48.2 L235.5,72.8 L216.2,87.8 L214,99.6 L201.2,102.8 L188.4,91 L169.1,81.4 L158.4,75 L165,40 Z" fill="#7a1a1a"/>
<path d="M162,45 C180,50 200,60 215,75 L214,99.6 L201.2,102.8 L188.4,91 L169.1,81.4 L158.4,75 Z" fill="#9a4444" opacity="0.8"/>
<path d="M0,48.2 C30,70 70,95 104,118 L105,126.3 L96.3,117.8 L64.2,104.9 L40.7,102.8 L16,106 L0,99.6 Z" fill="#b81820"/>
<path d="M0,60 C15,72 30,82 45,90 L40.7,102.8 L16,106 L0,99.6 Z" fill="#7a1a1c" opacity="0.8"/>
<path d="M30,60 C50,70 80,80 100,78 L110,60 C90,55 60,50 30,40 Z" fill="#8a1418" opacity="0.6"/>
<ellipse cx="120" cy="102" rx="17.5" ry="24" fill="#960c16"/>
<path d="M78,151 C84,138 98,130 118,129.5 C134,130 146,138 148.8,151 Z" fill="#cfa090"/>
</g></svg>
<div class="t" style="left:493.30px;top:1415.43px;width:60px;text-align:center;font-size:23.0px;line-height:23.0px;color:#1f2328;font-weight:700;letter-spacing:0px;">6</div>
<div class="t" style="left:608.60px;top:1414.83px;font-size:24.3px;line-height:24.3px;color:#3b4350;font-weight:400;letter-spacing:0px;white-space:nowrap">Model #6 — Red veil, tan shirt and background</div>
<div class="t" style="left:1297.20px;top:1414.83px;width:300px;text-align:center;font-size:24.3px;line-height:24.3px;color:#2b3038;font-weight:400;letter-spacing:0px;;transform:scaleX(0.928);transform-origin:50% 0;">CAM B</div>
<div class="t" style="left:1565.50px;top:1414.83px;width:300px;text-align:center;font-size:24.3px;line-height:24.3px;color:#2b3038;font-weight:400;letter-spacing:0px;;transform:scaleX(0.953);transform-origin:50% 0;">MS</div>
<div class="t" style="left:1833.90px;top:1414.83px;width:300px;text-align:center;font-size:24.3px;line-height:24.3px;color:#2b3038;font-weight:400;letter-spacing:0px;;transform:scaleX(0.889);transform-origin:50% 0;">LA</div>
<div class="t" style="left:2191.70px;top:1414.83px;width:300px;text-align:center;font-size:24.3px;line-height:24.3px;color:#2b3038;font-weight:400;letter-spacing:0px;;transform:scaleX(0.936);transform-origin:50% 0;">Sticks</div>
</body></html>
